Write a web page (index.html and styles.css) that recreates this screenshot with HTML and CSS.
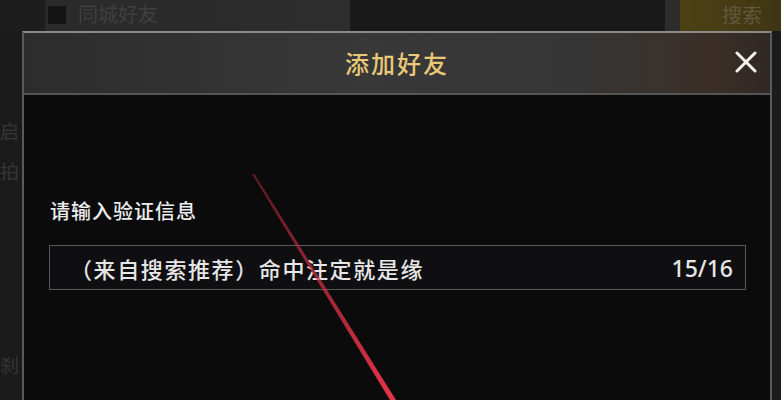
FILE: index.html
```html
<!DOCTYPE html>
<html lang="zh-CN">
<head>
  <meta charset="UTF-8" />
  <meta name="viewport" content="width=device-width, initial-scale=1.0"/>
  <title>添加好友</title>
  <link rel="stylesheet" href="styles.css">
</head>
<body>

  <div class="page">
    <div class="topbar">
      <div class="edge"></div>
      <div class="filter">
        <span class="check"></span>
        <span class="filter-label">同城好友</span>
      </div>
      <div class="field"></div>
      <div class="divider"></div>
      <button class="search">搜索</button>
    </div>

    <div class="side">
      <span class="side-text first">启</span>
      <span class="side-text">拍</span>
      <span class="side-text last">刹</span>
    </div>
  </div>

  <!-- Modal -->
  <div class="modal">
    <div class="modal-head">
      <h2>添加好友</h2>
      <button class="close" aria-label="关闭">
        <svg width="22" height="22" viewBox="0 0 22 22">
          <path d="M2 2 L20 20 M20 2 L2 20" stroke="#f2f2f2" stroke-width="3" stroke-linecap="round" />
        </svg>
      </button>
    </div>
    <div class="modal-body">
      <p class="label">请输入验证信息</p>
      <div class="input">
        <span class="value">（来自搜索推荐）命中注定就是缘</span>
        <span class="count">15/16</span>
      </div>
    </div>
  </div>

  <svg class="pointer" width="781" height="400" viewBox="0 0 781 400">
    <defs>
      <linearGradient id="laser" x1="0" y1="0" x2="0" y2="1">
        <stop offset="0" stop-color="#b02838" stop-opacity="0.5" />
        <stop offset="1" stop-color="#e8344a" />
      </linearGradient>
    </defs>
    <polygon points="252,174 254.5,174 396,400 390,400" fill="url(#laser)" />
  </svg>

</body>
</html>
```

FILE: styles.css
```css
body {
  margin: 0;
  width: 781px;
  height: 400px;
  overflow: hidden;
  position: relative;
  background: #1b1b1b;
  font-family: "Noto Sans CJK SC", "Noto Sans", sans-serif;
  color: white;
}

/* page behind the dialog */
.topbar {
  display: flex;
  height: 31px;
}

.edge {
  width: 45px;
  background: #1d1d1d;
}

.filter {
  width: 305px;
  display: flex;
  align-items: center;
  background: linear-gradient(to right, #2a2a2a, #2d2d2d);
}

.check {
  width: 18px;
  height: 18px;
  margin-left: 3px;
  margin-top: -2px;
  background: #141414;
}

.filter-label {
  margin-left: 12px;
  margin-top: -4px;
  font-size: 20px;
  color: #3f3f3f;
}

.field {
  width: 315px;
  background: #191919;
}

.divider {
  width: 15px;
  background: #2c2c2a;
}

.search {
  flex: 1;
  border: none;
  padding: 0 0 4px 42px;
  text-align: left;
  font-family: inherit;
  font-size: 20px;
  color: #5f5740;
  background: linear-gradient(to right, #4d4114, #3f3512);
}

.side {
  width: 22px;
  height: 369px;
  display: flex;
  flex-direction: column;
}

.side-text {
  font-size: 19px;
  line-height: 24px;
  color: #363636;
  margin-top: 16px;
}

.side-text.first {
  margin-top: 88px;
}

.side-text.last {
  margin-top: 170px;
}

/* Modal */
.modal {
  position: absolute;
  top: 31px;
  left: 22px;
  width: 746px;
  height: 367px;
  background: #0b0b0c;
  border: 2px solid #5a5a5a;
  border-top-color: #8a8a8a;
  border-bottom: none;
}

.modal-head {
  position: relative;
  height: 60px;
  display: flex;
  align-items: center;
  justify-content: center;
  background: linear-gradient(to right, #2c2c2c, #383838 45%, #353535 75%, #3b2f27 92%, #302824);
  border-bottom: 2px solid #555555;
}

.modal-head h2 {
  margin: 0 0 2px;
  font-size: 24px;
  font-weight: 500;
  letter-spacing: 2px;
  color: #e9c978;
}

.close {
  position: absolute;
  right: 13px;
  top: 18px;
  padding: 0;
  border: none;
  background: none;
  line-height: 0;
}

.modal-body {
  padding: 104px 24px 0 25px;
}

.label {
  margin: 0 0 22px 1px;
  font-size: 20px;
  font-weight: 500;
  line-height: 24px;
  letter-spacing: 1px;
  color: #ececec;
}

.input {
  height: 43px;
  display: flex;
  align-items: center;
  justify-content: space-between;
  padding: 0 12px 0 20px;
  border: 1.5px solid #58585c;
  background: #0f0f11;
}

.value {
  font-size: 22px;
  font-weight: 500;
  letter-spacing: 1.6px;
  color: #e6e6e6;
}

.count {
  font-family: "Noto Sans", sans-serif;
  font-size: 23px;
  font-weight: 500;
  color: #e6e6e6;
}

.pointer {
  position: absolute;
  top: 0;
  left: 0;
  pointer-events: none;
}
```
